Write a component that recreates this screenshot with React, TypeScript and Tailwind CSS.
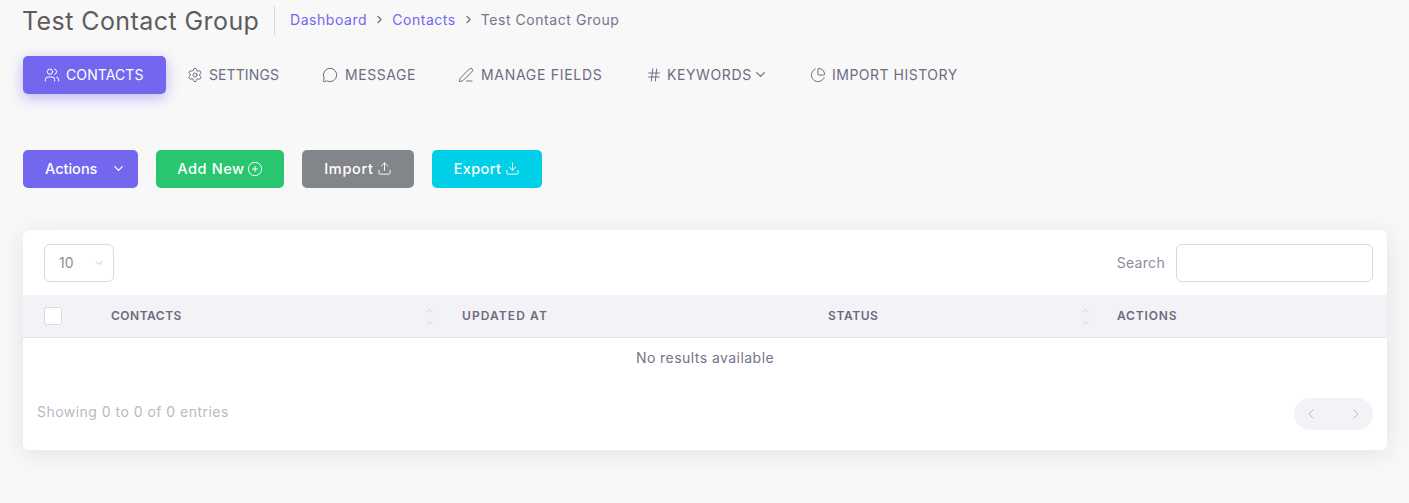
import React from 'react';
import { Users, Settings, MessageCircle, PenLine, Hash, ChevronDown, ChevronUp, ChevronLeft, ChevronRight, PieChart, CirclePlus, Upload, Download } from 'lucide-react';

const tabs = [
  { label: 'SETTINGS', icon: Settings, width: 'w-[135px]', gap: 'gap-[6px]', track: 'tracking-[0.1px]' },
  { label: 'MESSAGE', icon: MessageCircle, width: 'w-[136px]', gap: 'gap-[7px]', track: 'tracking-[0.55px]' },
  { label: 'MANAGE FIELDS', icon: PenLine, width: 'w-[188px]', gap: 'gap-[7px]', track: 'tracking-[0.7px]' },
];

const SortIcon = () => (
  <span className="flex flex-col items-center gap-[1px] text-[#c8c8d2]">
    <ChevronUp size={11} strokeWidth={1.5} />
    <ChevronDown size={11} strokeWidth={1.5} />
  </span>
);

export default function App() {
  return (
    <div className="min-h-[503px] bg-[#f8f8f9] px-[23px] font-['Inter','Open_Sans',sans-serif] text-[#6f6c82]">
      <div className="flex items-center h-[41px]">
        <h1 className="text-[25px] leading-[40px] text-[#5d5d5d] tracking-[0.42px] w-[251px] -ml-px whitespace-nowrap">Test Contact Group</h1>
        <div className="w-px h-[29px] bg-[#d8d8dd] ml-px mr-[15px]" />
        <nav className="flex items-center pb-[2px] text-[14px] tracking-[0.55px] text-[#76738a]">
          <span className="text-[#7367f0]">Dashboard</span>
          <ChevronRight size={13} className="mx-[6px] text-[#6f6b7d]" />
          <span className="text-[#7367f0]">Contacts</span>
          <ChevronRight size={13} className="mx-[6px] text-[#6f6b7d]" />
          <span>Test Contact Group</span>
        </nav>
      </div>

      <div className="flex items-center mt-[15px] text-[14px]">
        <div className="flex items-center h-[38px] w-[143px] mr-[22px] pl-[21px] pb-px gap-[6px] rounded-[5px] bg-[#7367f0] text-white shadow-[0_4px_14px_rgba(115,103,240,0.45)]">
          <Users size={16} strokeWidth={1.5} />
          <span className="tracking-[0.1px]">CONTACTS</span>
        </div>
        {tabs.map((tab) => (
          <div key={tab.label} className={`flex items-center pb-px ${tab.gap} ${tab.width} whitespace-nowrap`}>
            <tab.icon size={16} strokeWidth={1.5} className="-ml-px" />
            <span className={tab.track}>{tab.label}</span>
          </div>
        ))}
        <div className="flex items-center pb-px gap-[5px] w-[164px]">
          <Hash size={16} strokeWidth={1.5} className="-ml-px" />
          <span className="flex items-center tracking-[0.6px]">KEYWORDS<ChevronDown size={15} strokeWidth={2} className="ml-[1px]" /></span>
        </div>
        <div className="flex items-center pb-px gap-[6px] whitespace-nowrap">
          <PieChart size={16} strokeWidth={1.5} className="-ml-px" />
          <span className="tracking-[0.5px]">IMPORT HISTORY</span>
        </div>
      </div>

      <div className="flex items-center gap-[18px] mt-[56px] text-[14.5px] font-medium text-white">
        <button className="flex items-center justify-between h-[38px] w-[115px] pl-[22px] pr-[12px] pb-px rounded-[5px] bg-[#7367f0]">
          Actions
          <ChevronDown size={15} />
        </button>
        <button className="flex items-center justify-center gap-[2px] h-[38px] w-[128px] pb-px rounded-[5px] bg-[#28c76f] tracking-[0.6px]">
          Add New
          <CirclePlus size={16} strokeWidth={1.5} />
        </button>
        <button className="flex items-center justify-center gap-[3px] h-[38px] w-[112px] pb-px rounded-[5px] bg-[#82868b] tracking-[0.7px]">
          Import
          <Upload size={15} strokeWidth={1.5} />
        </button>
        <button className="flex items-center justify-center gap-[4px] h-[38px] w-[110px] pb-px rounded-[5px] bg-[#00cfe8] tracking-[0.4px]">
          Export
          <Download size={15} strokeWidth={1.5} />
        </button>
      </div>

      <div className="mt-[42px] w-[1364px] h-[220px] rounded-[6px] bg-white shadow-[0_4px_24px_rgba(34,41,47,0.1)]">
        <div className="flex items-center justify-between h-[65px] pl-[21px] pr-[14px]">
          <div className="flex items-center justify-between w-[70px] h-[38px] pl-[14px] pr-[8px] rounded-[6px] border border-[#dbdade] text-[14px] text-[#8f8d9a]">
            10
            <ChevronDown size={12} className="text-[#c8c8d0]" />
          </div>
          <div className="flex items-center gap-[11px] text-[14px] text-[#8f8d9a]">
            <span className="tracking-[0.3px]">Search</span>
            <div className="w-[197px] h-[38px] rounded-[6px] border border-[#dbdade]" />
          </div>
        </div>

        <div className="flex items-center h-[43px] bg-[#f3f2f7] border-b border-[#e6e5ec] text-[12px] font-semibold text-[#6e6b7b]">
          <div className="w-[88px] pl-[21px]">
            <div className="w-[18px] h-[18px] rounded-[3px] border border-[#dbdade] bg-white" />
          </div>
          <div className="flex items-center justify-between w-[351px] pr-[27px]">
            <span className="tracking-[0.5px]">CONTACTS</span>
            <SortIcon />
          </div>
          <div className="w-[366px] tracking-[1.1px]">UPDATED AT</div>
          <div className="flex items-center justify-between w-[263px]">
            <span className="tracking-[0.6px]">STATUS</span>
            <SortIcon />
          </div>
          <div className="ml-[26px] tracking-[0.85px]">ACTIONS</div>
        </div>

        <div className="h-[40px] flex items-center justify-center pb-[2px] text-[14px] tracking-[0.45px] text-[#76738a]">No results available</div>

        <div className="flex items-center justify-between px-[14px] mt-[20px]">
          <span className="mb-[6px] text-[14px] tracking-[0.47px] text-[#b9b9c3]">Showing 0 to 0 of 0 entries</span>
          <div className="flex items-center justify-between w-[79px] h-[32px] px-[9px] rounded-full bg-[#f3f2f7] text-[#b9b9c3]">
            <ChevronLeft size={16} strokeWidth={1.5} />
            <ChevronRight size={16} strokeWidth={1.5} />
          </div>
        </div>
      </div>
    </div>
  );
}
